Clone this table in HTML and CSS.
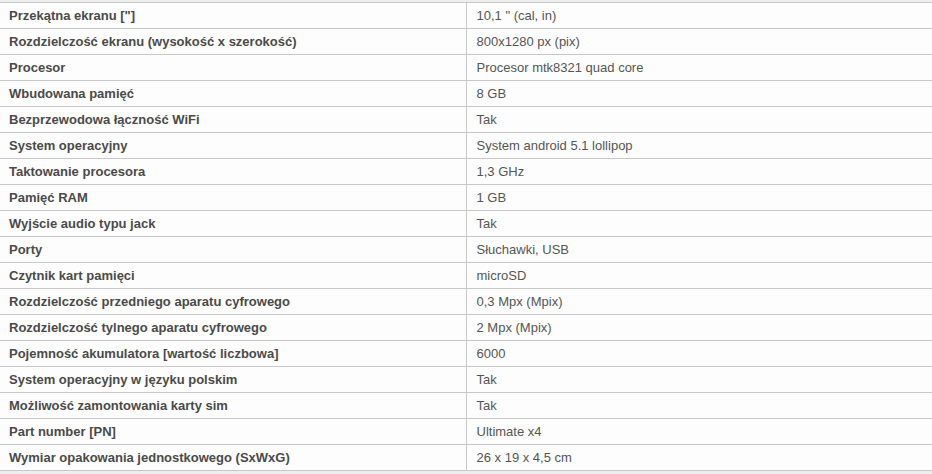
FILE: index.html
```html
<!DOCTYPE html>
<html lang="pl">
<head>
<meta charset="utf-8">
<title>Specyfikacja</title>
<link rel="stylesheet" href="styles.css">
</head>
<body>
<table class="spec">
<tbody>
<tr><th>Przekątna ekranu ["]</th><td>10,1 " (cal, in)</td></tr>
<tr><th>Rozdzielczość ekranu (wysokość x szerokość)</th><td>800x1280 px (pix)</td></tr>
<tr><th>Procesor</th><td>Procesor mtk8321 quad core</td></tr>
<tr><th>Wbudowana pamięć</th><td>8 GB</td></tr>
<tr><th>Bezprzewodowa łączność WiFi</th><td>Tak</td></tr>
<tr><th>System operacyjny</th><td>System android 5.1 lollipop</td></tr>
<tr><th>Taktowanie procesora</th><td>1,3 GHz</td></tr>
<tr><th>Pamięć RAM</th><td>1 GB</td></tr>
<tr><th>Wyjście audio typu jack</th><td>Tak</td></tr>
<tr><th>Porty</th><td>Słuchawki, USB</td></tr>
<tr><th>Czytnik kart pamięci</th><td>microSD</td></tr>
<tr><th>Rozdzielczość przedniego aparatu cyfrowego</th><td>0,3 Mpx (Mpix)</td></tr>
<tr><th>Rozdzielczość tylnego aparatu cyfrowego</th><td>2 Mpx (Mpix)</td></tr>
<tr><th>Pojemność akumulatora [wartość liczbowa]</th><td>6000</td></tr>
<tr><th>System operacyjny w języku polskim</th><td>Tak</td></tr>
<tr><th>Możliwość zamontowania karty sim</th><td>Tak</td></tr>
<tr><th>Part number [PN]</th><td>Ultimate x4</td></tr>
<tr><th>Wymiar opakowania jednostkowego (SxWxG)</th><td>26 x 19 x 4,5 cm</td></tr>
</tbody>
</table>
</body>
</html>
```
FILE: styles.css
```css
html, body {
  margin: 0;
  padding: 0;
}
body {
  background: #eeeeee;
  padding-top: 2px;
  font-family: "Liberation Sans", Arial, sans-serif;
  font-size: 13px;
}
.spec {
  width: 932px;
  border-collapse: collapse;
  table-layout: fixed;
  background: #fdfdfd;
}
.spec tr {
  border-top: 1px solid #c8c8c8;
  border-bottom: 1px solid #c8c8c8;
}
.spec th,
.spec td {
  height: 26px;
  padding: 0 9px;
  text-align: left;
  vertical-align: middle;
  line-height: 15px;
  box-sizing: border-box;
}
.spec th {
  width: 466px;
  font-weight: bold;
  color: #4a4a4a;
  border-right: 1px solid #c8c8c8;
}
.spec td {
  font-weight: normal;
  color: #555555;
  padding-left: 10px;
}
```
